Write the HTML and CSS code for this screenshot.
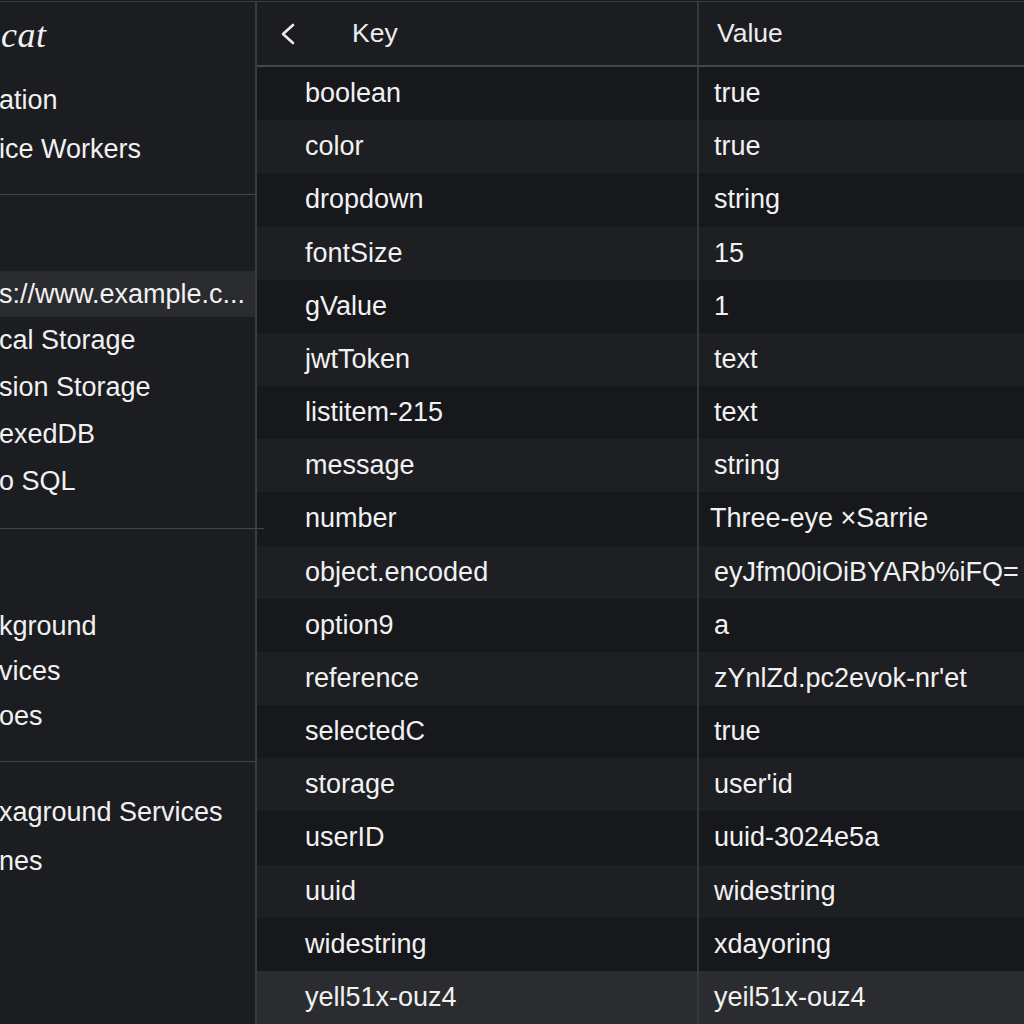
FILE: index.html
```html
<!DOCTYPE html>
<html>
<head>
<meta charset="utf-8">
<link rel="stylesheet" href="styles.css">
</head>
<body>
<div class="app">
  <aside class="sidebar">
    <div class="title">cat</div>
    <div class="section s1">
      <div class="item i49">ation</div>
      <div class="item i49">ice Workers</div>
    </div>
    <div class="divider"></div>
    <div class="section s2">
      <div class="item selected">s://www.example.c...</div>
      <div class="item i47">cal Storage</div>
      <div class="item i47">sion Storage</div>
      <div class="item i47">exedDB</div>
      <div class="item i47">o SQL</div>
    </div>
    <div class="divider wide"></div>
    <div class="section s3">
      <div class="item i45">kground</div>
      <div class="item i45">vices</div>
      <div class="item i45">oes</div>
    </div>
    <div class="divider"></div>
    <div class="section s4">
      <div class="item i49">xaground Services</div>
      <div class="item i49">nes</div>
    </div>
  </aside>
  <main class="table">
    <div class="head">
      <div class="hkey">
        <svg class="chev" width="16" height="22" viewBox="0 0 16 22"><polyline points="13,2 3,11 13,20" fill="none" stroke="#ececec" stroke-width="2.6" stroke-linecap="round" stroke-linejoin="round"/></svg>
        <span>Key</span>
      </div>
      <div class="hval">Value</div>
    </div>
    <div class="rows">
      <div class="row"><div class="k">boolean</div><div class="v">true</div></div>
      <div class="row"><div class="k">color</div><div class="v">true</div></div>
      <div class="row"><div class="k">dropdown</div><div class="v">string</div></div>
      <div class="row"><div class="k">fontSize</div><div class="v">15</div></div>
      <div class="row"><div class="k">gValue</div><div class="v">1</div></div>
      <div class="row"><div class="k">jwtToken</div><div class="v">text</div></div>
      <div class="row"><div class="k">listitem-215</div><div class="v">text</div></div>
      <div class="row"><div class="k">message</div><div class="v">string</div></div>
      <div class="row"><div class="k">number</div><div class="v tight">Three-eye ×Sarrie</div></div>
      <div class="row"><div class="k">object.encoded</div><div class="v">eyJfm00iOiBYARb%iFQ=</div></div>
      <div class="row"><div class="k">option9</div><div class="v">a</div></div>
      <div class="row"><div class="k">reference</div><div class="v">zYnlZd.pc2evok-nr'et</div></div>
      <div class="row"><div class="k">selectedC</div><div class="v">true</div></div>
      <div class="row"><div class="k">storage</div><div class="v">user'id</div></div>
      <div class="row"><div class="k">userID</div><div class="v">uuid-3024e5a</div></div>
      <div class="row"><div class="k">uuid</div><div class="v">widestring</div></div>
      <div class="row"><div class="k">widestring</div><div class="v">xdayoring</div></div>
      <div class="row last"><div class="k">yell51x-ouz4</div><div class="v">yeil51x-ouz4</div></div>
    </div>
  </main>
</div>
</body>
</html>
```
FILE: styles.css
```css
html, body {
  margin: 0;
  padding: 0;
  background: #1c1d21;
}
body {
  font-family: "Liberation Sans", Arial, sans-serif;
  color: #f1f1f1;
  width: 1024px;
  height: 1024px;
  overflow: hidden;
}
.app {
  display: grid;
  grid-template-columns: 257px 1fr;
  height: 1022px;
  margin-top: 1px;
  border-top: 1px solid #3a3b3f;
}
.sidebar {
  background: #1c1d21;
  border-right: 2px solid #3b3c40;
  display: flex;
  flex-direction: column;
  font-size: 27px;
  white-space: nowrap;
  position: relative;
}
.title {
  height: 64px;
  line-height: 66px;
  font-family: "Liberation Serif", serif;
  font-style: italic;
  font-size: 36px;
  padding-left: 1px;
  letter-spacing: 0.5px;
}
.section { display: flex; flex-direction: column; }
.s1 { padding-top: 10px; padding-bottom: 20px; }
.s2 { padding-top: 76px; padding-bottom: 23px; }
.s3 { padding-top: 75px; padding-bottom: 22px; }
.s4 { padding-top: 26px; }
.item {
  display: flex;
  align-items: center;
  margin-left: -1px;
}
.i49 { height: 49px; }
.i47 { height: 47px; }
.i45 { height: 45px; }
.selected {
  height: 46px;
  background: #2a2b2f;
}
.divider {
  height: 1px;
  background: #45464a;
  flex: none;
}
.divider.wide {
  margin-right: -9px;
  position: relative;
  z-index: 2;
}
.table {
  display: flex;
  flex-direction: column;
  min-width: 0;
}
.head {
  height: 63px;
  display: grid;
  grid-template-columns: 442px 1fr;
  background: #1c1d21;
  border-bottom: 2px solid #45464a;
  font-size: 26.5px;
  color: #ececec;
}
.hkey {
  display: flex;
  align-items: center;
  padding-left: 23px;
  gap: 56px;
  border-right: 2px solid #36373b;
}
.chev { flex: none; }
.hval {
  display: flex;
  align-items: center;
  padding-left: 18px;
}
.rows {
  flex: 1;
  display: flex;
  flex-direction: column;
}
.row {
  flex: 1;
  display: grid;
  grid-template-columns: 442px 1fr;
  font-size: 27px;
  background: #17181c;
}
.row:nth-child(even) { background: #1e1f23; }
.row.last { background: #2b2c30; }
.k {
  display: flex;
  align-items: center;
  padding-left: 48px;
  border-right: 2px solid #36373b;
}
.v {
  display: flex;
  align-items: center;
  padding-left: 15px;
  white-space: nowrap;
  overflow: hidden;
}
.v.tight { padding-left: 11px; }
```
